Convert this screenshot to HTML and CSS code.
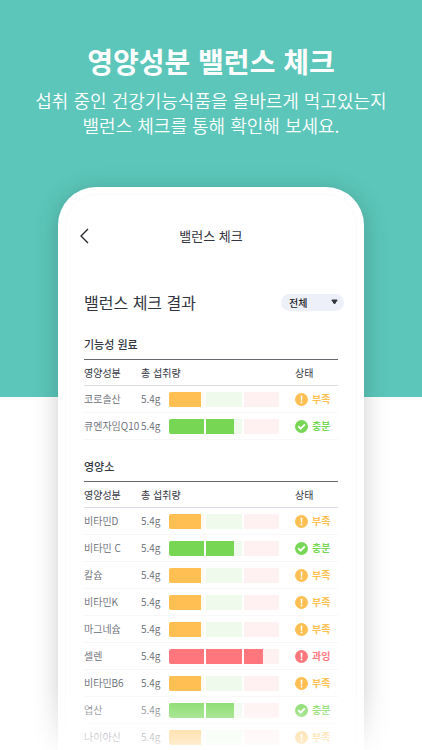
FILE: index.html
```html
<!DOCTYPE html>
<html lang="ko">
<head>
    <meta charset="utf-8">
    <meta name="viewport" content="width=device-width, initial-scale=1">
    <title>영양성분 밸런스 체크</title>
    <link rel="stylesheet" href="styles.css">
</head>
<body>
    <svg width="0" height="0" class="sprite" aria-hidden="true">
        <symbol id="icon-warn" viewBox="0 0 26 26">
            <circle cx="13" cy="13" r="13" fill="currentColor"/>
            <path d="M11.2 5.5h3.6l-.6 10h-2.4z" fill="#fff"/>
            <circle cx="13" cy="19" r="1.9" fill="#fff"/>
        </symbol>
        <symbol id="icon-check" viewBox="0 0 26 26">
            <circle cx="13" cy="13" r="13" fill="currentColor"/>
            <path d="M6.5 12.5l4.8 4.8 8.4-8.4" fill="none" stroke="#fff" stroke-width="3.6"/>
        </symbol>
    </svg>

    <header class="intro">
        <h1>영양성분 밸런스 체크</h1>
        <p>섭취 중인 건강기능식품을 올바르게 먹고있는지<br>밸런스 체크를 통해 확인해 보세요.</p>
    </header>

    <main class="phone">
        <div class="screen">
            <div class="navbar">
                <button class="back" type="button" aria-label="뒤로">
                    <svg width="9" height="16" viewBox="0 0 9 16"><path d="M8 1L1 8l7 7" fill="none" stroke="currentColor" stroke-width="1.3"/></svg>
                </button>
                <span class="navbar-title">밸런스 체크</span>
            </div>

            <div class="result-head">
                <h2>밸런스 체크 결과</h2>
                <div class="filter">
                    <select id="filter" aria-label="영양성분 필터">
                        <option>전체</option>
                        <option>부족</option>
                        <option>충분</option>
                        <option>과잉</option>
                    </select>
                    <svg class="filter-arrow" width="7" height="6" viewBox="0 0 7 6"><path d="M.8 1h5.400L3.500 5z" fill="currentColor" stroke="currentColor" stroke-linejoin="round"/></svg>
                </div>
            </div>

            <section>
                <h3>기능성 원료</h3>
                <table>
                    <thead>
                        <tr><th class="name">영양성분</th><th class="amount">총 섭취량</th><th></th><th class="status">상태</th></tr>
                    </thead>
                    <tbody id="materials"></tbody>
                </table>
            </section>

            <section>
                <h3>영양소</h3>
                <table>
                    <thead>
                        <tr><th class="name">영양성분</th><th class="amount">총 섭취량</th><th></th><th class="status">상태</th></tr>
                    </thead>
                    <tbody id="nutrients"></tbody>
                </table>
            </section>
        </div>
    </main>
    <div class="fade"></div>

    <script src="script.js"></script>
</body>
</html>
```

FILE: styles.css
```css
* {
    box-sizing: border-box;
}
body {
    margin: 0;
    height: 100vh;
    overflow: hidden;
    position: relative;
    background: linear-gradient(#5cc6ba 53%, #fff 53%);
    font-family: "Noto Sans CJK KR", sans-serif;
    color: #34363f;
}
h1, h2, h3, p {
    margin: 0;
}
.sprite {
    position: absolute;
}

.intro {
    padding-top: 41px;
    text-align: center;
    color: #fff;
}
.intro h1 {
    font-size: 28px;
    line-height: 40px;
    font-weight: 700;
}
.intro p {
    margin-top: 7px;
    font-size: 18px;
    line-height: 25px;
    font-weight: 350;
}

.phone {
    margin: 49px 58px 0;
    padding: 7px 7px 0;
    background: #fff;
    border-radius: 38px 38px 0 0;
    box-shadow: 0 4px 26px rgba(0, 0, 0, 0.2);
}
.screen {
    padding: 0 18px;
    border: 1px solid #fafafb;
    border-bottom: 0;
    border-radius: 32px 32px 0 0;
}
.navbar {
    display: grid;
    grid-template-columns: 20px 1fr 20px;
    align-items: center;
    margin: 31px -6px 0;
    height: 20px;
}
.back {
    display: flex;
    padding: 0 0 0 2px;
    border: 0;
    background: none;
    color: #22242a;
}
.navbar-title {
    font-size: 13px;
    line-height: 20px;
    text-align: center;
}

.result-head {
    display: flex;
    justify-content: space-between;
    align-items: center;
    margin: 44px -6px 0 0;
    height: 24px;
}
.result-head h2 {
    font-size: 16px;
    line-height: 24px;
    font-weight: 400;
}
.filter {
    position: relative;
}
.filter select {
    display: block;
    appearance: none;
    width: 63px;
    height: 17px;
    padding: 0 8px;
    border: 0;
    border-radius: 9px;
    background: #edf0f9;
    color: #22242a;
    font-family: inherit;
    font-size: 10px;
    line-height: 17px;
    font-weight: 500;
}
.filter-arrow {
    position: absolute;
    right: 6px;
    top: 5px;
    pointer-events: none;
}

section {
    margin-top: 18px;
}
section:first-of-type {
    margin-top: 22px;
}
h3 {
    height: 23px;
    font-size: 11px;
    line-height: 16px;
    font-weight: 500;
}
table {
    width: 100%;
    table-layout: fixed;
    border-spacing: 0;
    font-size: 10px;
    line-height: 14px;
}
th, td {
    height: 27px;
    padding: 0;
    text-align: left;
    white-space: nowrap;
}
th {
    border-top: 1px solid #66686e;
    border-bottom: 1px solid #dcdee5;
    font-weight: 400;
}
td {
    border-bottom: 1px solid #f7f7f9;
    color: #666972;
    font-weight: 350;
}
.name {
    width: 57px;
}
.amount {
    width: 28px;
}
.status {
    width: 43px;
}

.gauge {
    display: grid;
    grid-template-columns: 1fr 1fr 1fr;
    gap: 2px;
    margin-right: 16px;
    height: 15px;
    border-radius: 2px;
    overflow: hidden;
}
.gauge span:nth-child(1) {
    background: #fffaf0;
}
.gauge span:nth-child(2) {
    background: #effaed;
}
.gauge span:nth-child(3) {
    background: #fff0f1;
}
.gauge i {
    display: block;
    height: 100%;
    background: currentColor;
}
.low {
    color: #ffbf52;
}
.good {
    color: #77d755;
}
.over {
    color: #ff777d;
}
.badge {
    display: flex;
    align-items: center;
    gap: 4px;
    font-weight: 700;
}

.fade {
    position: absolute;
    left: 0;
    right: 0;
    bottom: 0;
    height: 62px;
    background: linear-gradient(rgba(255, 255, 255, 0), rgba(255, 255, 255, 0.8));
    pointer-events: none;
}
```

FILE: script.js
```javascript
const labels = { low: '부족', good: '충분', over: '과잉' };

// fill of each of the three gauge sections, in percent
const fills = {
    low: [91, 0, 0],
    good: [100, 78, 0],
    over: [100, 100, 56]
};

const materials = [
    ['코로솔산', 'low'],
    ['큐엔자임Q10', 'good']
];

const nutrients = [
    ['비타민D', 'low'],
    ['비타민 C', 'good'],
    ['칼슘', 'low'],
    ['비타민K', 'low'],
    ['마그네슘', 'low'],
    ['셀렌', 'over'],
    ['비타민B6', 'low'],
    ['엽산', 'good'],
    ['나이아신', 'low']
];

function renderRows(id, rows) {
    document.getElementById(id).innerHTML = rows.map(([name, state]) => `
        <tr>
            <td>${name}</td>
            <td>5.4g</td>
            <td><div class="gauge ${state}">${fills[state].map(fill => `<span><i style="width: ${fill}%"></i></span>`).join('')}</div></td>
            <td><div class="badge ${state}"><svg width="13" height="13"><use href="#icon-${state === 'good' ? 'check' : 'warn'}"/></svg>${labels[state]}</div></td>
        </tr>
    `).join('');
}

renderRows('materials', materials);
renderRows('nutrients', nutrients);
```
